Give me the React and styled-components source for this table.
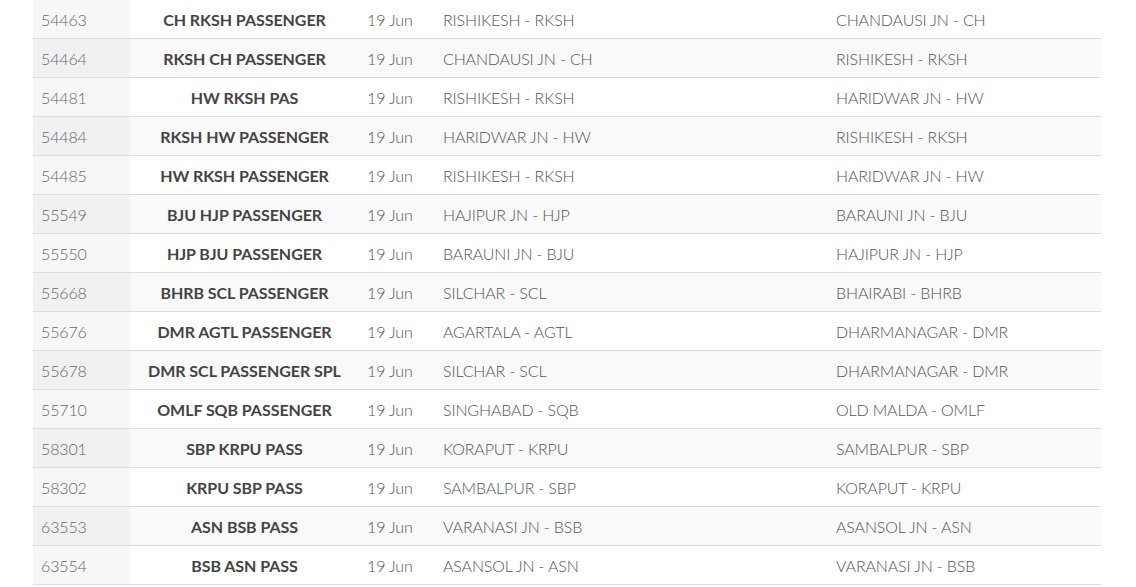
import React from "react";
import styled, { createGlobalStyle } from "styled-components";

const Global = createGlobalStyle`
  html, body { margin: 0; padding: 0; background: #fff; }
  body { font-family: Lato, "Open Sans", sans-serif; }
`;

const rows = [
  ["54463", "CH RKSH PASSENGER", "RISHIKESH - RKSH", "CHANDAUSI JN - CH"],
  ["54464", "RKSH CH PASSENGER", "CHANDAUSI JN - CH", "RISHIKESH - RKSH"],
  ["54481", "HW RKSH PAS", "RISHIKESH - RKSH", "HARIDWAR JN - HW"],
  ["54484", "RKSH HW PASSENGER", "HARIDWAR JN - HW", "RISHIKESH - RKSH"],
  ["54485", "HW RKSH PASSENGER", "RISHIKESH - RKSH", "HARIDWAR JN - HW"],
  ["55549", "BJU HJP PASSENGER", "HAJIPUR JN - HJP", "BARAUNI JN - BJU"],
  ["55550", "HJP BJU PASSENGER", "BARAUNI JN - BJU", "HAJIPUR JN - HJP"],
  ["55668", "BHRB SCL PASSENGER", "SILCHAR - SCL", "BHAIRABI - BHRB"],
  ["55676", "DMR AGTL PASSENGER", "AGARTALA - AGTL", "DHARMANAGAR - DMR"],
  ["55678", "DMR SCL PASSENGER SPL", "SILCHAR - SCL", "DHARMANAGAR - DMR"],
  ["55710", "OMLF SQB PASSENGER", "SINGHABAD - SQB", "OLD MALDA - OMLF"],
  ["58301", "SBP KRPU PASS", "KORAPUT - KRPU", "SAMBALPUR - SBP"],
  ["58302", "KRPU SBP PASS", "SAMBALPUR - SBP", "KORAPUT - KRPU"],
  ["63553", "ASN BSB PASS", "VARANASI JN - BSB", "ASANSOL JN - ASN"],
  ["63554", "BSB ASN PASS", "ASANSOL JN - ASN", "VARANASI JN - BSB"],
];

const Table = styled.div`
  margin: -1px 0 0 33px;
  width: 1068px;
  border-bottom: 1px solid #ddd;
`;

const Row = styled.div`
  display: grid;
  grid-template-columns: 97px 229px 76px 393px 1fr;
  height: 38px;
  border-top: 1px solid #ddd;
  background: ${(p) => (p.$alt ? "#f9f9f9" : "#fff")};
`;

const Cell = styled.div`
  display: flex;
  align-items: center;
  padding: 0 8px;
  font-size: 16px;
  font-weight: 300;
  letter-spacing: -0.15px;
  color: #555;
  white-space: nowrap;
`;

const NumCell = styled(Cell)`
  background: ${(p) => (p.$alt ? "#f1f1f1" : "#f7f7f7")};
  color: #666;
`;

const NameCell = styled(Cell)`
  justify-content: center;
  font-weight: 700;
  letter-spacing: -0.05px;
  color: #444;
`;

export default function App() {
  return (
    <>
      <Global />
      <Table>
        {rows.map((r, i) => (
          <Row key={r[0]} $alt={i % 2 === 1}>
            <NumCell $alt={i % 2 === 1}>{r[0]}</NumCell>
            <NameCell>{r[1]}</NameCell>
            <Cell>19 Jun</Cell>
            <Cell>{r[2]}</Cell>
            <Cell>{r[3]}</Cell>
          </Row>
        ))}
      </Table>
    </>
  );
}
